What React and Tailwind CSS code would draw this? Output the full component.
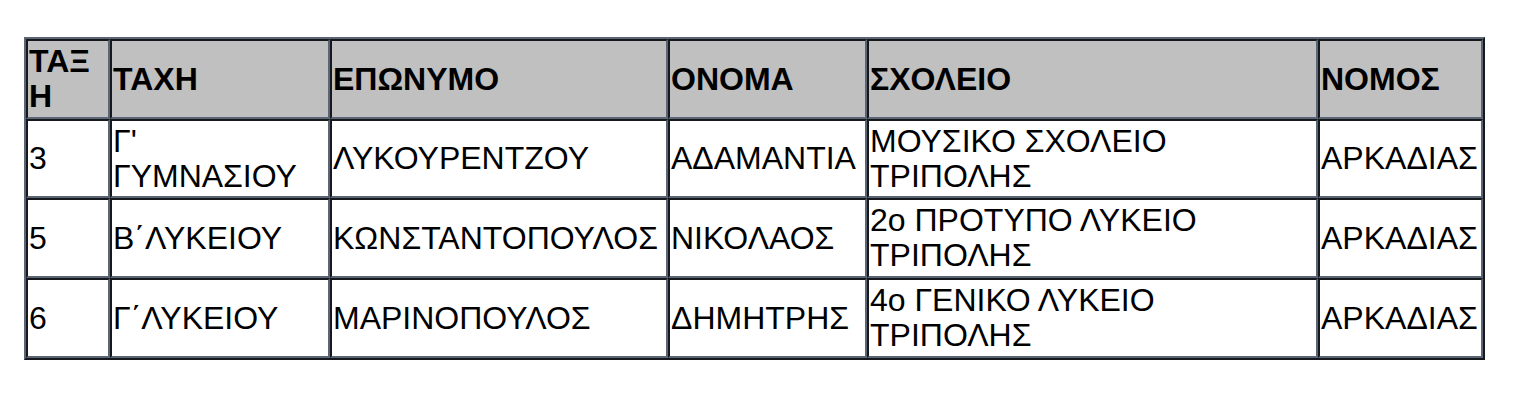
import React from "react";

const rows = [
  ["3", "Γ' ΓΥΜΝΑΣΙΟΥ", "ΛΥΚΟΥΡΕΝΤΖΟΥ", "ΑΔΑΜΑΝΤΙΑ", "ΜΟΥΣΙΚΟ ΣΧΟΛΕΙΟ ΤΡΙΠΟΛΗΣ", "ΑΡΚΑΔΙΑΣ"],
  ["5", "Β΄ΛΥΚΕΙΟΥ", "ΚΩΝΣΤΑΝΤΟΠΟΥΛΟΣ", "ΝΙΚΟΛΑΟΣ", "2ο ΠΡΟΤΥΠΟ ΛΥΚΕΙΟ ΤΡΙΠΟΛΗΣ", "ΑΡΚΑΔΙΑΣ"],
  ["6", "Γ΄ΛΥΚΕΙΟΥ", "ΜΑΡΙΝΟΠΟΥΛΟΣ", "ΔΗΜΗΤΡΗΣ", "4ο ΓΕΝΙΚΟ ΛΥΚΕΙΟ ΤΡΙΠΟΛΗΣ", "ΑΡΚΑΔΙΑΣ"],
];

const rowHeights = ["h-[79px]", "h-[80px]", "h-[80px]"];

const cell =
  "border-2 border-t-[#15181c] border-l-[#15181c] border-r-[#5b6573] border-b-[#5b6573] px-[1px] py-[1px] align-middle text-left leading-[35px] whitespace-normal";

export default function App() {
  return (
    <div className="min-h-[418px] bg-white pt-[37px] pl-[24px] text-black" style={{ fontFamily: '"Liberation Sans", Arial, sans-serif' }}>
      <table className="table-fixed w-[1461px] border-separate border-spacing-0 border-2 border-t-[#5b6573] border-l-[#5b6573] border-r-[#15181c] border-b-[#15181c] text-[32px]">
        <colgroup>
          <col className="w-[84px]" />
          <col className="w-[220px]" />
          <col className="w-[338px]" />
          <col className="w-[199px]" />
          <col className="w-[451px]" />
          <col className="w-[165px]" />
        </colgroup>
        <thead>
          <tr className="h-[80px]">
            <th className={`${cell} bg-[#c0c0c0] font-bold break-all`}>ΤΑΞΗ</th>
            <th className={`${cell} bg-[#c0c0c0] font-bold`}>ΤΑΧΗ</th>
            <th className={`${cell} bg-[#c0c0c0] font-bold`}>ΕΠΩΝΥΜΟ</th>
            <th className={`${cell} bg-[#c0c0c0] font-bold`}>ΟΝΟΜΑ</th>
            <th className={`${cell} bg-[#c0c0c0] font-bold`}>ΣΧΟΛΕΙΟ</th>
            <th className={`${cell} bg-[#c0c0c0] font-bold`}>ΝΟΜΟΣ</th>
          </tr>
        </thead>
        <tbody>
          {rows.map((r, i) => (
            <tr key={i} className={rowHeights[i]}>
              {r.map((c, j) => (
                <td key={j} className={`${cell} font-normal`}>
                  {c}
                </td>
              ))}
            </tr>
          ))}
        </tbody>
      </table>
    </div>
  );
}
